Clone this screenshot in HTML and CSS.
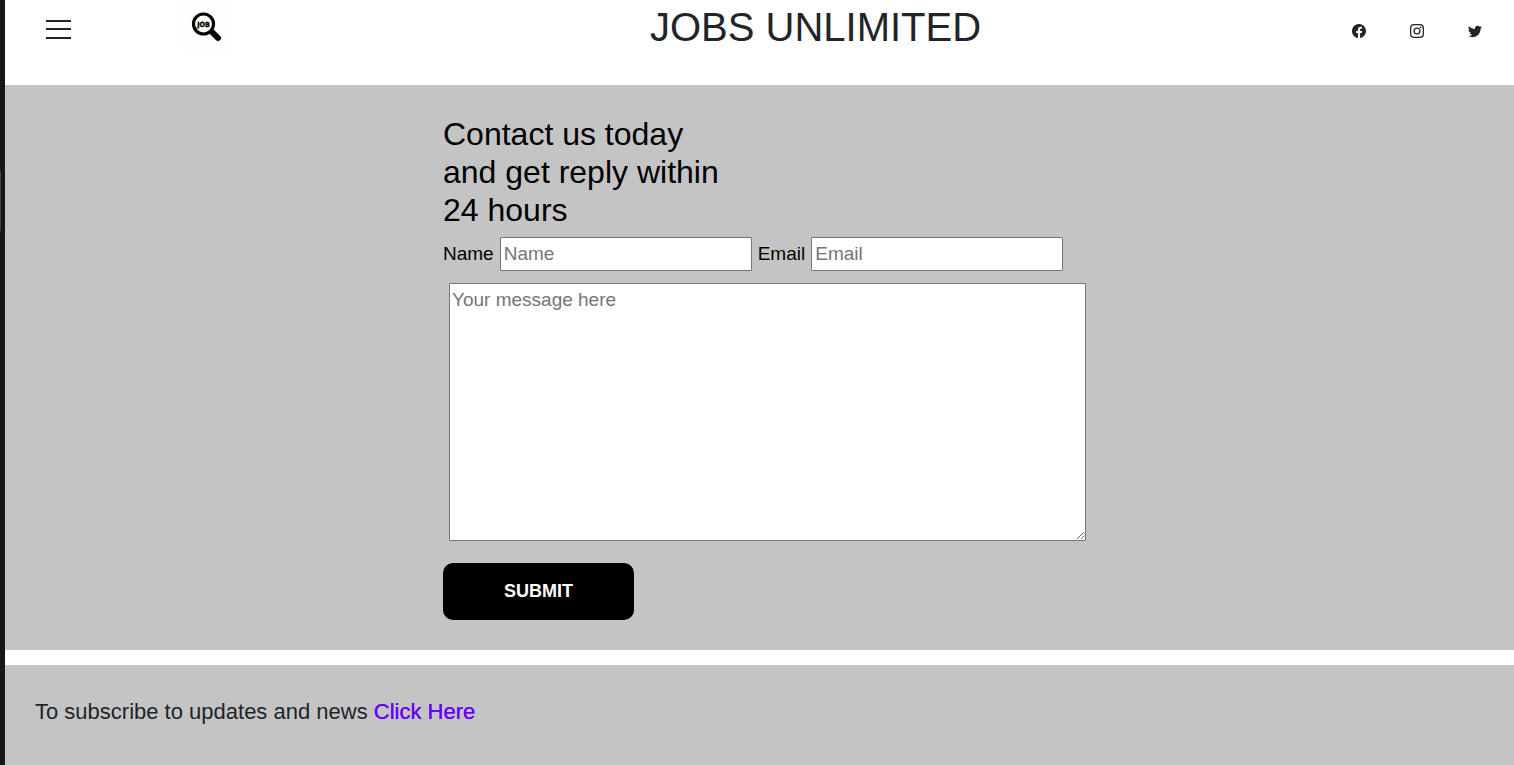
FILE: index.html
```
<!DOCTYPE html>
<html lang="en">
<head>
<meta charset="utf-8">
<meta name="viewport" content="width=device-width, initial-scale=1">
<title>Jobs Unlimited</title>
<link rel="stylesheet" href="styles.css">
</head>
<body>
<div class="edge"></div>
<div class="page">
  <header class="header">
    <div class="brand">
      <button class="menu" type="button" aria-label="Menu">
        <svg width="25" height="20" viewBox="0 0 25 20" fill="#212529"><path d="M0 0h25v2H0zM0 8h25v2H0zM0 17h25v2H0z"/></svg>
      </button>
      <a class="logo" href="#" aria-label="Home">
        <svg width="48" height="48" viewBox="0 0 48 48">
          <path d="M28 27l2 2" stroke="#000" stroke-width="4"/>
          <path d="M30.500 29.500l5.500 5.500" stroke="#000" stroke-width="6" stroke-linecap="round"/>
          <circle cx="21.500" cy="21" r="10" fill="#fff" stroke="#000" stroke-width="3.200"/>
          <text class="logo-text" x="21.500" y="24" text-anchor="middle">JOB</text>
        </svg>
      </a>
    </div>
    <h1 class="title">JOBS UNLIMITED</h1>
    <nav class="social">
      <a href="#" aria-label="Facebook"><svg viewBox="0 0 16 16"><path d="M16 8.049c0-4.446-3.582-8.05-8-8.05C3.58 0-.002 3.603-.002 8.05c0 4.017 2.926 7.347 6.75 7.951v-5.625h-2.03V8.05H6.75V6.275c0-2.017 1.195-3.131 3.022-3.131.876 0 1.791.157 1.791.157v1.98h-1.009c-.993 0-1.303.621-1.303 1.258v1.51h2.218l-.354 2.326H9.25V16c3.824-.604 6.75-3.934 6.75-7.951z"/></svg></a>
      <a href="#" aria-label="Instagram"><svg viewBox="0 0 16 16"><path fill-rule="evenodd" d="M4.7 0h6.6A4.7 4.7 0 0 1 16 4.700v6.600A4.700 4.700 0 0 1 11.300 16H4.700A4.700 4.700 0 0 1 0 11.300V4.700A4.700 4.700 0 0 1 4.700 0zm.1 1.450A3.350 3.350 0 0 0 1.450 4.800v6.400a3.350 3.350 0 0 0 3.350 3.350h6.400a3.350 3.350 0 0 0 3.350-3.350V4.800a3.350 3.350 0 0 0-3.350-3.350zM8 3.890a4.110 4.110 0 1 1 0 8.220 4.110 4.110 0 0 1 0-8.220zm0 1.440a2.670 2.670 0 1 0 0 5.340 2.670 2.670 0 0 0 0-5.340z"/><circle cx="12.270" cy="3.730" r=".96"/></svg></a>
      <a href="#" aria-label="Twitter"><svg viewBox="0 0 16 16"><path d="M5.026 15c6.038 0 9.341-5.003 9.341-9.334 0-.14 0-.282-.006-.422A6.685 6.685 0 0 0 16 3.542a6.658 6.658 0 0 1-1.889.518 3.301 3.301 0 0 0 1.447-1.817 6.533 6.533 0 0 1-2.087.793A3.286 3.286 0 0 0 7.875 6.030a9.325 9.325 0 0 1-6.767-3.429 3.289 3.289 0 0 0 1.018 4.382A3.323 3.323 0 0 1 .640 6.575v.045a3.288 3.288 0 0 0 2.632 3.218 3.203 3.203 0 0 1-.865.115 3.230 3.230 0 0 1-.614-.057 3.283 3.283 0 0 0 3.067 2.277A6.588 6.588 0 0 1 .780 13.580a6.320 6.320 0 0 1-.780-.045A9.344 9.344 0 0 0 5.026 15z"/></svg></a>
    </nav>
  </header>
  <main class="contact">
    <form class="form">
      <h2 class="heading">Contact us today<br>and get reply within<br>24 hours</h2>
      <div class="fields">
        <label for="name">Name</label>
        <input id="name" type="text" placeholder="Name">
        <label for="email">Email</label>
        <input id="email" type="email" placeholder="Email">
      </div>
      <textarea class="message" aria-label="Message" placeholder="Your message here"></textarea>
      <button class="submit" type="submit">SUBMIT</button>
    </form>
  </main>
  <footer class="footer">
    <p>To subscribe to updates and news <a href="#">Click Here</a></p>
  </footer>
</div>
</body>
</html>
```
FILE: styles.css
```
* { box-sizing: border-box; }

body {
  margin: 0;
  min-height: 100vh;
  display: flex;
  background: #fff;
  color: #212529;
  font-family: "Liberation Sans", Arial, sans-serif;
}

.edge {
  flex: 0 0 5px;
  background: linear-gradient(#444, #444) 0 171px / 1px 60px no-repeat #171717;
}

.page {
  flex: 1;
  display: flex;
  flex-direction: column;
}

.header {
  display: grid;
  grid-template-columns: 645fr auto 533fr;
  align-items: start;
  min-height: 85px;
  padding-top: 3px;
}

.brand {
  display: flex;
  gap: 111px;
  padding-left: 41px;
}

.menu {
  padding: 17px 0 0;
  border: 0;
  background: none;
  line-height: 0;
  align-self: flex-start;
}

.logo {
  height: 48px;
  background: #fdfdfd;
}

.logo svg,
.social svg { display: block; }

.logo-text {
  font-family: "DejaVu Sans Condensed", "Liberation Sans", sans-serif;
  font-size: 7px;
  font-weight: bold;
  stroke: #000;
  stroke-width: 0.4px;
}

.title {
  margin: 0;
  font-size: 40px;
  font-weight: 400;
  line-height: 48px;
}

.social {
  display: flex;
  justify-content: flex-end;
  gap: 44px;
  padding: 21px 32px 0 0;
}

.social svg {
  width: 14px;
  height: 14px;
  fill: #212529;
}

.contact {
  padding: 30px 0;
  background: #c4c4c4;
  color: #000;
}

.form {
  width: 633px;
  margin: 0 auto;
}

.heading {
  margin: 0 0 8px;
  font-size: 32px;
  font-weight: 400;
  line-height: 38px;
}

.fields {
  display: flex;
  align-items: center;
  gap: 6px;
  font-size: 19px;
}

.fields input,
.message {
  border: 1px solid #767676;
  border-radius: 1px;
  background: #fff;
  font: inherit;
}

.fields input {
  width: 252px;
  height: 34px;
  padding: 1px 3px;
}

.message {
  display: block;
  width: 637px;
  height: 258px;
  margin: 12px 0 22px 6px;
  padding: 2px;
  font-size: 19px;
  line-height: 28px;
}

.fields input::placeholder,
.message::placeholder { color: #757575; }

.submit {
  display: block;
  width: 191px;
  height: 57px;
  border: 0;
  border-radius: 10px;
  background: #000;
  color: #fff;
  font: bold 18px "Liberation Sans", Arial, sans-serif;
}

.footer {
  flex: 1;
  margin-top: 15px;
  padding: 30px;
  background: #c4c4c4;
  font-size: 22px;
  line-height: 33px;
}

.footer p { margin: 0; }

.footer a {
  color: #60f;
  text-decoration: none;
  text-shadow: 0 0 #60f;
}
```
